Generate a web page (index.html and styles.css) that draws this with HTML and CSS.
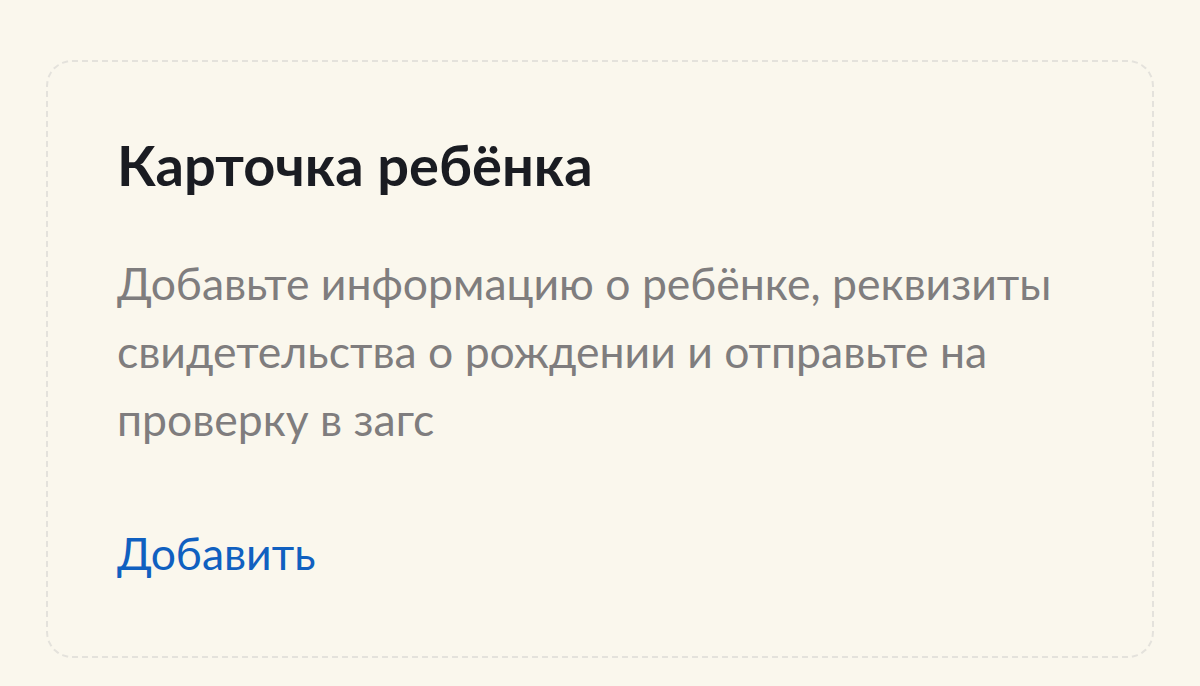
FILE: index.html
```html
<!DOCTYPE html>
<html lang="ru">
<head>
<meta charset="utf-8">
<link rel="stylesheet" href="styles.css">
</head>
<body>
<div class="page">
  <div class="card">
    <h1 class="title">Карточка ребёнка</h1>
    <p class="text">Добавьте информацию о ребёнке, реквизиты свидетельства о рождении и отправьте на проверку в загс</p>
    <a class="link" href="#">Добавить</a>
  </div>
</div>
</body>
</html>
```
FILE: styles.css
```css
html, body {
  margin: 0;
  padding: 0;
  background: #faf7ed;
  width: 1200px;
  height: 686px;
  overflow: hidden;
}
.page {
  padding: 60px 46px 0 46px;
  font-family: Lato, "Noto Sans", sans-serif;
}
.card {
  box-sizing: border-box;
  height: 598px;
  border: 2px dashed #e4e2dc;
  border-radius: 26px;
  padding: 71px 69px 0 69px;
  display: flex;
  flex-direction: column;
  align-items: flex-start;
}
.title {
  margin: 0;
  font-size: 56px;
  line-height: 64px;
  font-weight: 700;
  color: #1a1c22;
}
.text {
  margin: 52px 0 0 0;
  font-size: 44.5px;
  line-height: 68px;
  color: #7f7d7e;
  max-width: 960px;
}
.link {
  margin-top: 70px;
  font-size: 44.5px;
  line-height: 60px;
  color: #1060c0;
  text-decoration: none;
}
```
